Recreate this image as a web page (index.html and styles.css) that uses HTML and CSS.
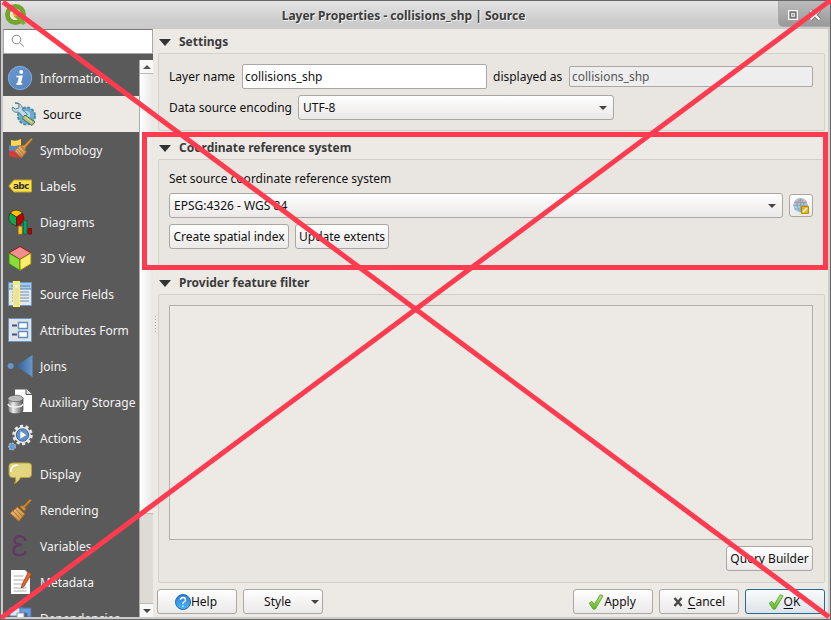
FILE: index.html
```html
<!DOCTYPE html>
<html lang="en">
<head>
<meta charset="utf-8">
<title>Layer Properties</title>
<link rel="stylesheet" href="styles.css">
</head>
<body>
<svg class="defs" width="0" height="0" aria-hidden="true">
  <defs>
    <linearGradient id="blue" x1="0" y1="0" x2="1" y2="1"><stop offset="0" stop-color="#6a98cf"/><stop offset="1" stop-color="#5483bd"/></linearGradient>
    <linearGradient id="joinblue"><stop offset="0" stop-color="#315d91"/><stop offset="1" stop-color="#6998ce"/></linearGradient>
    <linearGradient id="metal"><stop offset="0" stop-color="#777"/><stop offset=".35" stop-color="#eee"/><stop offset="1" stop-color="#555"/></linearGradient>
    <linearGradient id="green" x1="0" y1="0" x2="0" y2="1"><stop offset="0" stop-color="#b4ef72"/><stop offset="1" stop-color="#5cb81c"/></linearGradient>
    <linearGradient id="help" x1="0" y1="0" x2="0" y2="1"><stop offset="0" stop-color="#2b7fd6"/><stop offset="1" stop-color="#4cb5f5"/></linearGradient>
    <linearGradient id="wood" x1="0" y1="0" x2="1" y2="1"><stop offset="0" stop-color="#edc68d"/><stop offset="1" stop-color="#c58331"/></linearGradient>
    <symbol id="check" viewBox="0 0 16 16"><path d="M1.2 9.2 3.8 7.3 6.3 10.6 12.2.8 15 1.9 7.3 15 5.2 15.2Z" fill="url(#green)" stroke="#5a9c35" stroke-width=".9" stroke-linejoin="round"/></symbol>
  </defs>
</svg>
<div class="window">
  <header class="titlebar">
    <svg class="logo" width="24" height="22" viewBox="0 0 24 22"><circle cx="10.5" cy="10.5" r="8" fill="none" stroke="#72a52f" stroke-width="5"/><circle cx="10.5" cy="10.5" r="5.5" fill="#f3e8c7"/><path d="m10 9 3-1 1 4 7 7-3 2-7-7-2-1z" fill="#79ad2e"/><path d="m8 8 4-1 1 3-3 3-2-2z" fill="#f4a63e"/></svg>
    <h1>Layer Properties - collisions_shp | Source</h1>
    <div class="winbuttons">
      <svg width="36" height="20" viewBox="0 0 36 20"><path d="M.7 4.700h8.600v8.600H.7z" fill="#777" stroke="#fff" stroke-width="1.200"/><path d="M3.500 7.500h3v3h-3z" fill="#aaa" stroke="#ddd"/><path d="m22.500 4.500 9 9m0-9-9 9" stroke="#777" stroke-width="4"/><path d="m22.500 4.500 9 9m0-9-9 9" stroke="#fff" stroke-width="2"/></svg>
    </div>
  </header>
  <div class="content">
    <aside class="sidebar">
      <div class="search"><svg width="14" height="14" viewBox="0 0 14 14" fill="none" stroke="#848484"><circle cx="5.500" cy="5.500" r="4.300"/><path d="m8.700 8.700 4.300 4"/></svg></div>
      <div class="listarea">
        <ul class="nav">
          <li><svg viewBox="0 0 24 24"><circle cx="12" cy="12" r="11.700" fill="url(#blue)" stroke="#86abd8"/><circle cx="13.200" cy="6.100" r="2" fill="#fff"/><path d="M8.300 10.500h5.400l-1.700 7.200h2.300M8.300 18h5.800" fill="none" stroke="#fff" stroke-width="1.600"/><path d="m11 10 3.500-.5-2.400 9H9z" fill="#fff"/></svg><span>Information</span></li>
          <li class="selected"><svg viewBox="0 0 24 24"><circle cx="15.500" cy="14" r="8.500" fill="#6baed2" stroke="#4e88aa" stroke-dasharray="3 1.500" stroke-width="2"/><circle cx="15" cy="13" r="4" fill="#b8d8e6"/><path d="m4 1 4 1-.3 4-3.300 1-3-2c-.8 4 2 6 6 5l6 6 3-4-5-4C12 4 8 0 4 1z" fill="#c1dce7" stroke="#547d91"/><path d="m14 13 10 7-3 3.500-10-7z" fill="#b3c278" stroke="#546a4e"/><path d="m14 15 7 5" stroke="#e0e3b4"/></svg><span>Source</span></li>
          <li><svg viewBox="0 0 24 24"><path d="M3 2q5 2 10-1v7L3 9z" fill="#ffd84d"/><path d="M1 7q5 2 10 0v6H1z" fill="#5d87bf"/><path d="M1 13q6 0 9-1l3 7q-6 2-12-1z" fill="#cf3c3b"/><path d="m23.500 0 1 1.500-7 8 .5 1.500-2 1-3-3 1-2 2 .500z" fill="#dc9a3f" stroke="#9c6219" stroke-width=".7"/><path d="m12.500 7 6 6.500-5 6.500-7-7z" fill="url(#wood)" stroke="#a9712f"/><path d="m10 10 6 7m-4-9 6 6m-9-2 5 7" stroke="#9f6c34" stroke-width=".6"/></svg><span>Symbology</span></li>
          <li><svg viewBox="0 0 24 24"><path d="M.8 12 6 6h17.500v12H6z" fill="#ffe149" stroke="#c7a41e"/><text x="5" y="15.300" class="abc">abc</text></svg><span>Labels</span></li>
          <li><svg viewBox="0 0 24 24"><g stroke="#392718" stroke-width=".7"><path d="M8.500 7 2 3q6-6 12.500 0z" fill="#ffc400"/><path d="M8.500 7 2 3q-5 9 6.500 13z" fill="#0ca84d"/><path d="m8.500 7 6-4q5 9-6 13z" fill="#bd0000"/><path d="M10.500 16.500H14V24h-3.500z" fill="#ffc62a" stroke="#dd8500"/><path d="M15.500 10.500H19V24h-3.500z" fill="#00a663" stroke="#006532"/><path d="M20 18.500h3.500V24H20z" fill="#bd0000" stroke="#760000"/></g></svg><span>Diagrams</span></li>
          <li><svg viewBox="0 0 24 24"><path d="m12 .5 11 6.300L12 13.500.9 6.800z" fill="#f28e8d" stroke="#8f1816"/><path d="m.9 7 11.100 6.500v11L1 17.800z" fill="#88dd3d" stroke="#458416"/><path d="m12 13.500 11-6.600v11l-11 6.600z" fill="#ffed6b" stroke="#927f09"/></svg><span>3D View</span></li>
          <li><svg viewBox="0 0 24 24"><path d="M.5.5h23v23H.5z" fill="#e4e8eb" stroke="#6795c8"/><path d="M1 1h22v6H1z" fill="#a5cce9"/><path d="M1 7h22M3 4h19" stroke="#5583b4"/><path d="M4 10h17M4 13h17M4 16h17M4 19h17" stroke="#7092b6"/><path d="M5.700-.3h5.600v24.600H5.700z" fill="#e8dfae" stroke="#fff25c" stroke-width="1.500"/><circle cx="8.500" cy="4" r="1.500" fill="#fff"/></svg><span>Source Fields</span></li>
          <li><svg viewBox="0 0 24 24"><path d="M.5.5h23v23H.5z" fill="#dfe3e6" stroke="#6895c8"/><path d="M4 7.500h5M4 16.500h5" stroke="#405972" stroke-width="2"/><path d="M10.500 4.500h9v6h-9zm0 9h9v6h-9z" fill="#fff" stroke="#5e8dc0" stroke-width="1.400"/></svg><span>Attributes Form</span></li>
          <li><svg viewBox="0 0 24 24"><circle cx="2.600" cy="12" r="3" fill="#6796cc"/><path d="M8 12 24.500 1v22z" fill="url(#joinblue)"/></svg><span>Joins</span></li>
          <li><svg viewBox="0 0 24 24"><path d="M7-.5h12l5 5V15H7z" fill="#fff"/><path d="M7 15h17v7H7z" fill="#fff"/><path d="M18-.5v5h6" fill="#ddd" stroke="#555"/><path d="M0 8v12c0 5 15 5 15 0V8z" fill="url(#metal)" stroke="#555" stroke-width=".7"/><ellipse cx="7.500" cy="8.500" rx="7.600" ry="3.300" fill="#bbb" stroke="#555" stroke-width=".7"/><path d="M0 14c1 4 14 4 15 0" stroke="#eee" fill="none" stroke-width="1.500"/></svg><span>Auxiliary Storage</span></li>
          <li><svg viewBox="0 0 24 24"><circle cx="14.500" cy="9" r="9" fill="none" stroke="#e8e8e8" stroke-width="2.500" stroke-dasharray="3.200 2.450"/><circle cx="14.500" cy="9" r="8.200" fill="#e8e8e8"/><circle cx="14.500" cy="9" r="6.200" fill="#5e91ca" stroke="#426a96"/><path d="m12.300 5.200 6 3.800-6 3.800z" fill="#fff"/><circle cx="4" cy="20.500" r="3.300" fill="#659bd0" stroke="#a5b9ca" stroke-width="1.300" stroke-dasharray="2 1"/></svg><span>Actions</span></li>
          <li><svg viewBox="0 0 24 24"><path d="M4.500 1h16q3 0 3 3v8q0 3.500-3 3.500h-8q-1.500 4-6 6 2-3 1-6h-3Q1 15.500 1 12V4q0-3 3.500-3z" fill="#e4d680" stroke="#b6a237"/><path d="M2.800 10q0-7 7-7" fill="none" stroke="#fff" stroke-width="1.500"/></svg><span>Display</span></li>
          <li><svg viewBox="0 0 24 24"><path d="m22 1 1.500 1.500-6.500 7 1 2-2 1.500-4-4 1.500-1.500 2 .5z" fill="#d28c34" stroke="#9c641d"/><path d="m9.500 9 7.500 7-6 7.500L2 15z" fill="url(#wood)" stroke="#a36318"/><path d="m7.500 11 7.500 8m-10-6 7.500 8" stroke="#99601f" stroke-width=".7"/></svg><span>Rendering</span></li>
          <li><svg viewBox="0 0 24 24"><path d="M17.500 7C17 1 7 1 6.500 6c0 3 3 4.500 7 5-5 0-8 2-8 5.500 0 6 10 6 12.500 1" fill="none" stroke="#613965" stroke-width="2.500"/></svg><span>Variables</span></li>
          <li><svg viewBox="0 0 24 24"><path d="M3 0h14l5 5v19H3z" fill="#fff"/><path d="M5.500 6h10m-10 4h11m-11 4h9m-9 4h13m-13 3h13" stroke="#aaa"/><path d="m20.500 2 3 2-8 13-2 1 .5-3z" fill="#e9692e" stroke="#a6451f"/></svg><span>Metadata</span></li>
          <li><svg viewBox="0 0 24 24"><path d="M2 2h13v8H2z" fill="#d9e7f5" stroke="#6897ca"/><path d="M12 2h11v9h-4V7h-7z" fill="#6b9ddd" stroke="#4a72ac"/><path d="M9 7h7v9H9z" fill="#fff" stroke="#819bb7"/></svg><span>Dependencies</span></li>
        </ul>
        <div class="scroll"><div class="scrollbtn"><i class="up"></i></div><div class="thumb"></div><div class="trough"></div><div class="scrollbtn"><i class="down"></i></div></div>
      </div>
    </aside>
    <div class="splitter"><i></i></div>
    <main>
      <h2><i></i>Settings</h2>
      <section class="group settings">
        <div class="row name"><label>Layer name</label><div class="field">collisions_shp</div><label class="shown">displayed as</label><div class="field readonly">collisions_shp</div></div>
        <div class="row enc"><label>Data source encoding</label><div class="combo">UTF-8<i class="down"></i></div></div>
      </section>
      <h2 class="second"><i></i>Coordinate reference system</h2>
      <section class="group crs">
        <p>Set source coordinate reference system</p>
        <div class="row"><div class="combo">EPSG:4326 - WGS 84<i class="down"></i></div><button class="globe" aria-label="Select CRS"><svg width="16" height="16" viewBox="0 0 16 16"><circle cx="7.500" cy="7.500" r="7" fill="#9fcdf5"/><path d="M.5 7a7 7 0 0 1 14 0z" fill="#b8bbc0"/><path d="M1 4.500h13M0 7.500h15M1 11h13M7.500 1v13M7.500 1q-7 6 0 13M7.500 1q7 6 0 13" fill="none" stroke="#8391a3" stroke-width=".6"/><path d="M8.500 8.500h7v7h-7z" fill="#dfb71b" stroke="#b88b00"/><path d="m10 14 4-4" stroke="#fff" stroke-width="1.600"/></svg></button></div>
        <div class="row actions"><button class="create">Create spatial index</button><button class="update">Update extents</button></div>
      </section>
      <h2 class="third"><i></i>Provider feature filter</h2>
      <section class="group filter"><div class="query"></div><button>Query Builder</button></section>
      <footer>
        <button class="help"><svg width="16" height="16" viewBox="0 0 16 16"><circle cx="8" cy="8" r="7.500" fill="url(#help)" stroke="#216bb0"/><path d="M5.500 6Q5.500 3.500 8 3.500T10.500 6Q10.500 7.300 9 8T8 10M8 11.500v1.500" fill="none" stroke="#fff" stroke-width="1.300"/></svg>Help</button>
        <button class="style">Style<i class="down"></i></button>
        <span class="spacer"></span>
        <button class="tick"><svg width="16" height="16"><use href="#check"/></svg>Apply</button>
        <button class="cancel"><svg width="10" height="10" viewBox="0 0 10 10"><path d="m1.500 1 7 8m0-8-7 8" stroke="#4c4c4c" stroke-width="2.600"/></svg><span><u>C</u>ancel</span></button>
        <button class="ok tick"><svg width="16" height="16"><use href="#check"/></svg><span><u>O</u>K</span></button>
      </footer>
    </main>
  </div>
</div>
<svg class="markup" width="831" height="620" viewBox="0 0 831 620"><path d="M144.500 134.500h681v133h-681z"/><path d="m3 2 826 615M831 0 1 618"/></svg>
</body>
</html>
```
FILE: styles.css
```css
* { box-sizing: border-box; }
body { margin: 0; width: 831px; height: 620px; overflow: hidden; font: 12px/16px "Noto Sans", sans-serif; color: #111; }
.defs { position: absolute; }
.window { width: 831px; height: 620px; border: 1px solid #666; background: #ccc; display: flex; flex-direction: column; }
.titlebar { height: 28px; flex: none; background: linear-gradient(#e5e5e5, #cecece 65%, #cacaca); display: grid; grid-template-columns: 52px 1fr 52px; align-items: start; }
.logo { margin: 3px 0 0 4px; }
h1 { font-size: 12px; line-height: 16px; margin: 7px 0 0; text-align: center; color: #3c3c3c; text-shadow: 1px 1px 0 #f2f2f2; white-space: nowrap; transform: translateX(-12px); }
.winbuttons { height: 26px; padding: 5px 0 0 9px; background: linear-gradient(#bcbcbc, #999); border: 1px solid #aaa; border-width: 0 0 1px 1px; border-radius: 0 0 0 5px; overflow: hidden; }
.content { display: flex; margin: 0 2px 2px; height: 588px; background: #edeae6; }
.sidebar { width: 150px; flex: none; }
.search { height: 25px; border: 1px solid #a8a8a8; border-top-color: #777; background: #fff; padding: 4px 7px; }
.search svg { display: block; }
.listarea { height: 563px; background: #5a5a5a; padding-top: 6px; display: flex; }
.nav { margin: 0; padding: 0; width: 136px; height: 557px; overflow: hidden; list-style: none; color: #f4f4f4; }
.nav li { height: 36px; padding-left: 5px; display: flex; align-items: center; gap: 8px; white-space: nowrap; }
.nav span { padding-top: 2px; }
.nav svg { width: 24px; height: 24px; flex: none; overflow: visible; }
.nav .selected { background: #edeae5; color: #111; padding-left: 8px; }
.abc { font: bold 9px "DejaVu Sans", sans-serif; fill: #333; letter-spacing: -.8px; }
.scroll { width: 14px; height: 557px; border-left: 1px solid #aaa; background: #dedbd7; display: flex; flex-direction: column; }
.scrollbtn { height: 14px; flex: none; background: #f8f8f7; border-bottom: 1px solid #bbb; display: flex; align-items: center; justify-content: center; }
.scrollbtn:last-child { border-bottom: 0; border-top: 1px solid #bbb; }
.thumb { height: 440px; background: linear-gradient(90deg, #fff, #e9e7e5); border-bottom: 1px solid #bbb; }
.trough { flex: 1; }
.up, .down { display: block; width: 0; height: 0; border: 4px solid transparent; }
.up { border-top: 0; border-bottom-color: #555; }
.down { border-bottom: 0; border-top-color: #444; }
.splitter { width: 5px; flex: none; padding: 287px 0 0 2px; }
.splitter i { display: block; width: 1px; height: 17px; background: repeating-linear-gradient(#aaa 0 1px, transparent 1px 3px); }
main { width: 667px; }
h2 { font-size: 12px; line-height: 16px; height: 24px; margin: 0; padding-top: 5px; color: #3b3b3b; display: flex; gap: 8px; }
h2 i { width: 0; height: 0; border: 6px solid transparent; border-top: 7px solid #333; border-bottom: 0; margin: 5px 0 0 1px; }
.second { height: 28px; padding-top: 9px; letter-spacing: -.03px; }
.third { height: 27px; padding-top: 8px; }
.group { border: 1px solid #d3d0cc; border-radius: 2px; background: #e9e6e2; padding: 10px; }
.row { display: flex; align-items: center; }
.row label { white-space: nowrap; }
.settings { height: 78px; }
.name { height: 25px; }
.name label { width: 73px; }
.name .shown { width: 82px; padding-left: 6px; }
.field { width: 245px; height: 25px; border: 1px solid #aaa7a4; border-radius: 2px; background: #fff; padding: 4px 2px; white-space: nowrap; }
.readonly { width: 244px; height: 21px; padding-top: 2px; background: #eee; color: #555; }
.enc { margin-top: 6px; }
.enc label { width: 129px; }
.combo, button { height: 25px; border: 1px solid #aaa6a2; border-radius: 3px; background: linear-gradient(#fefefe, #ebe9e8); color: #111; font: 12px/16px "Noto Sans", sans-serif; white-space: nowrap; }
.combo { width: 316px; padding: 0 6px 0 4px; display: flex; align-items: center; justify-content: space-between; }
.crs { height: 108px; }
.crs p { margin: 1px 0 6px; height: 16px; }
.crs .combo { width: 614px; }
button { padding: 0; margin: 0; display: flex; align-items: center; justify-content: center; }
.globe { width: 24px; height: 23px; margin-left: 6px; }
.actions { margin-top: 6px; gap: 6px; }
.create { width: 120px; }
.update { width: 94px; }
.filter { height: 289px; }
.query { width: 644px; height: 235px; border: 1px solid #b2afac; background: #ede9e4; }
.filter button { width: 87px; margin: 6px 1px 0 auto; }
footer { display: flex; gap: 6px; margin: 6px 0 0 -1px; width: 668px; }
footer button { width: 80px; }
footer .style { justify-content: flex-end; padding-right: 3px; gap: 20px; }
.help, .tick { padding-right: 2px; }
.spacer { flex: 1; }
.cancel { gap: 5px; }
.ok { border-color: #236b94; background: linear-gradient(#fafcfd, #dce3e8); }
u { text-underline-offset: 2px; }
.markup { position: absolute; left: 0; top: 0; fill: none; stroke: #ff3b4f; stroke-width: 5; }
```
